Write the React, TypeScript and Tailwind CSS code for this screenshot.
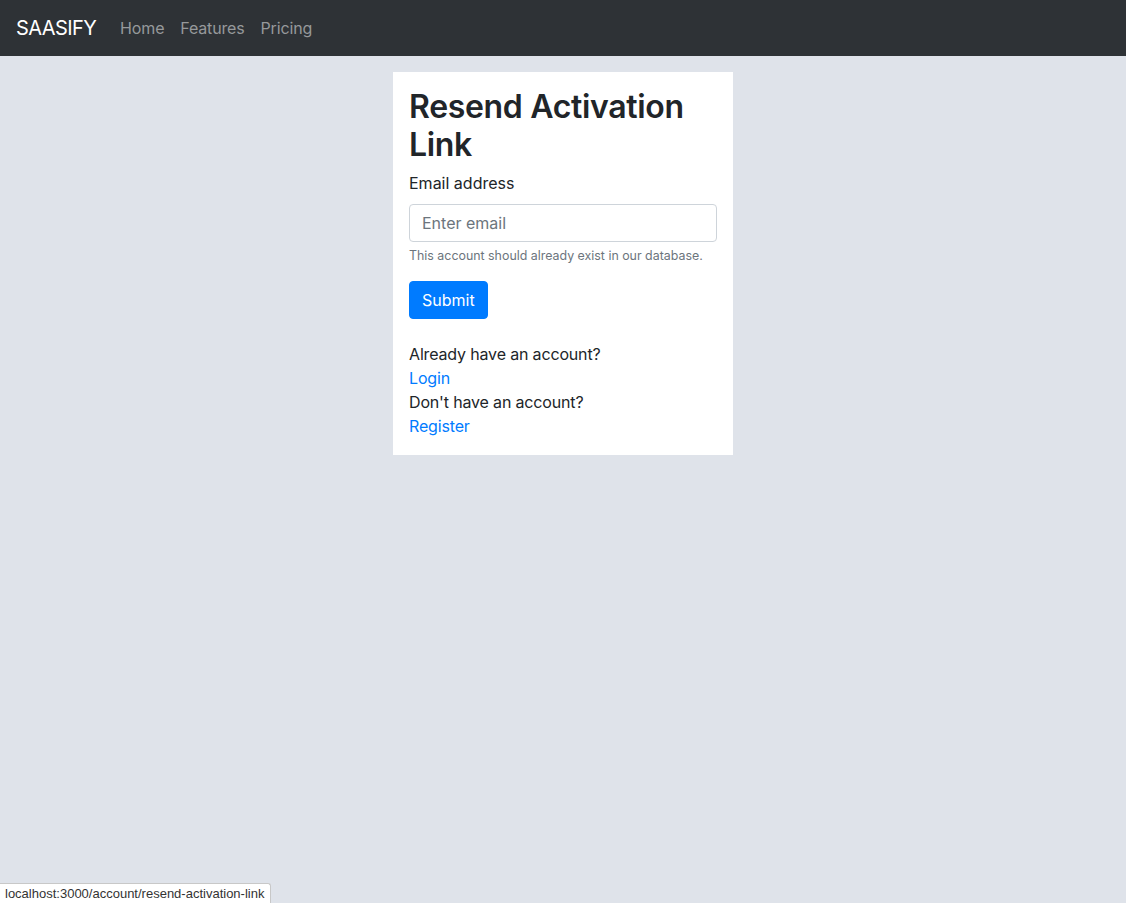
import React from "react";

export default function App() {
  return (
    <div className="min-h-[903px] bg-[#dfe3ea] font-['Inter',sans-serif] text-[#212529] relative">
      <nav className="h-[56px] bg-[#2e3236] flex items-center px-4">
        <a className="text-white text-[20px] mr-4 leading-[30px] tracking-[-0.03em]">SAASIFY</a>
        <div className="flex">
          <a className="px-2 text-[16px] text-[#96999b] tracking-[-0.01em]">Home</a>
          <a className="px-2 text-[16px] text-[#96999b] tracking-[-0.01em]">Features</a>
          <a className="px-2 text-[16px] text-[#96999b] tracking-[-0.01em]">Pricing</a>
        </div>
      </nav>
      <div className="flex justify-center pt-4">
        <div className="w-[340px] bg-white p-4">
          <h1 className="text-[32px] font-semibold leading-[38px] mb-2 tracking-[-0.01em]">Resend Activation Link</h1>
          <div className="mb-4">
            <label className="block text-[16px] leading-6 mb-2 -translate-y-px">Email address</label>
            <input
              className="w-full h-[38px] border border-[#ced4da] rounded-[4px] px-3 text-[16px] placeholder:text-[#6c757d] outline-none"
              placeholder="Enter email"
            />
            <div className="mt-1 text-[12.4px] leading-[19px] text-[#6c757d]">
              This account should already exist in our database.
            </div>
          </div>
          <button className="h-[38px] px-3 pb-px bg-[#007bff] text-white text-[16px] rounded-[4px] border border-[#007bff]">
            Submit
          </button>
          <div className="mt-6 text-[16px] leading-6 -translate-y-px tracking-[-0.01em]">
            <div>Already have an account?</div>
            <a className="block text-[#007bff]">Login</a>
            <div>Don't have an account?</div>
            <a className="block text-[#007bff]">Register</a>
          </div>
        </div>
      </div>
      <div className="absolute left-0 bottom-0 h-[20px] pl-[5px] pr-[6px] bg-white border border-[#c8c8c8] border-l-0 border-b-0 rounded-tr-[3px] text-[13px] leading-[19px] text-[#333] font-['Liberation_Sans',sans-serif]">
        localhost:3000/account/resend-activation-link
      </div>
    </div>
  );
}
